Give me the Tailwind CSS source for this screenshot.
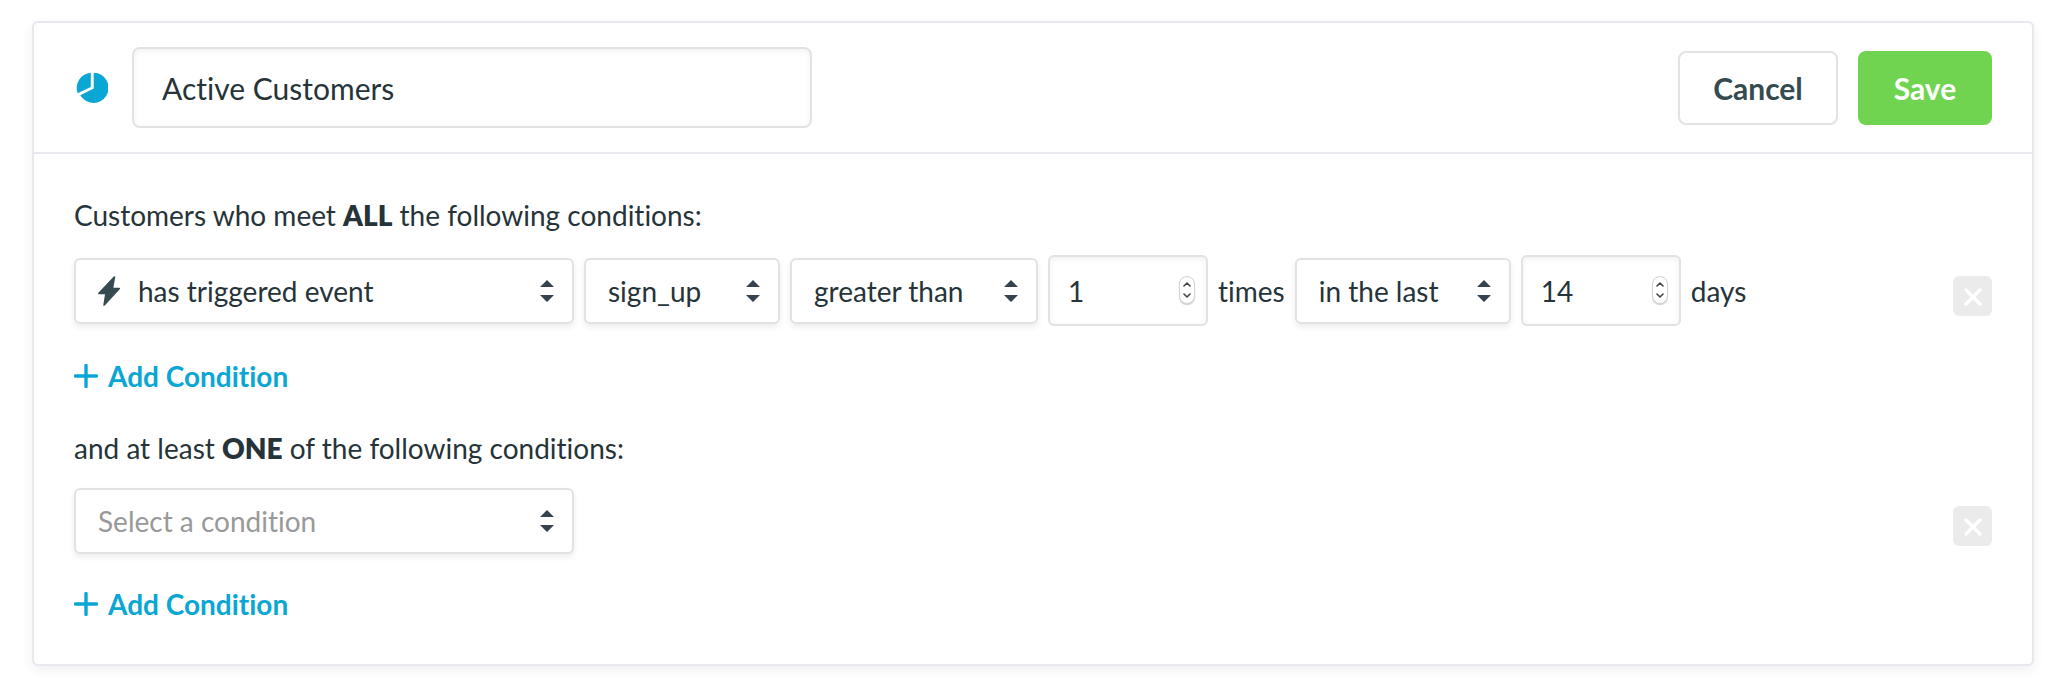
<!DOCTYPE html>
<html lang="en">
<head>
<meta charset="utf-8">
<meta name="viewport" content="width=device-width, initial-scale=1">
<title>Active Customers</title>
<script src="https://cdn.jsdelivr.net/npm/@tailwindcss/browser@4"></script>
</head>
<body class="bg-white pt-[21px] pr-[22px] pb-[23px] pl-8 font-['Lato','Open_Sans',sans-serif] text-[28px] leading-10 text-[#263439] [font-variant-ligatures:no-common-ligatures]">
<svg class="hidden" aria-hidden="true">
  <symbol id="sort" viewBox="0 0 14 22"><path d="M7 0l7 7H0zM7 22l7-7H0z" fill="#36434f"/></symbol>
  <symbol id="plus" viewBox="0 0 24 24"><path d="M12 1.5v21M1.5 12h21" stroke="currentColor" stroke-width="3.4" stroke-linecap="round" fill="none"/></symbol>
  <symbol id="cross" viewBox="0 0 18 18"><path d="M2 2l14 14M16 2L2 16" stroke="currentColor" stroke-width="3.2" stroke-linecap="round" fill="none"/></symbol>
  <symbol id="spin" viewBox="0 0 8 5"><path d="M1 4l3-3 3 3" stroke="#444" stroke-width="1.6" stroke-linecap="round" stroke-linejoin="round" fill="none"/></symbol>
</svg>
<form class="rounded-md border-2 border-[#e8e8ee] bg-white shadow-[0_4px_12px_rgba(40,40,90,0.07)]">
  <header class="flex items-center border-b-2 border-[#e8e8ee] py-6 pr-10 pl-[42px]">
    <svg class="mr-6 size-8 shrink-0" viewBox="0 0 32 32" fill="#0aa6d4" aria-hidden="true">
      <path d="M17.7 .7A15.1 15.1 0 1 1 4.3 23.2L17.7 16.6z"/>
      <path d="M14.8.7v14.4L1.7 21.200A15.200 15.200 0 0 1 14.800.7z"/>
    </svg>
    <input type="text" aria-label="Segment name" value="Active Customers" class="h-[81px] w-[680px] rounded-lg border-2 border-[#e2e2e2] bg-white px-7 text-[30px] shadow-[inset_0_2px_6px_rgba(0,0,0,0.06)] outline-none [font-variant-ligatures:no-common-ligatures]">
    <div class="ml-auto flex gap-5 text-[30px] font-bold">
      <button type="button" class="h-[74px] w-40 rounded-lg border-2 border-[#e2e2e2] bg-white text-[#364b50]">Cancel</button>
      <button type="submit" class="h-[74px] w-[134px] rounded-lg bg-[#70d450] text-white">Save</button>
    </div>
  </header>

  <main class="px-10 pt-[41px] pb-10">
    <section>
      <p>Customers who meet <b class="font-extrabold">ALL</b> the following conditions:</p>
      <div class="mt-5 flex items-center gap-[10px]">
        <div class="relative">
          <select aria-label="Condition" class="h-[66px] w-[500px] appearance-none rounded-md border-2 border-[#e2e2e2] bg-white pr-12 pl-[62px] shadow-[0_3px_6px_rgba(0,0,0,0.08)] outline-none"><option>has triggered event</option></select>
          <svg class="pointer-events-none absolute top-[18px] left-6 h-[30px] w-[22px]" viewBox="0 0 22 30" fill="#364b50" aria-hidden="true"><path d="M16 .3q1.300-.5 1.200.9L15.400 11.700h6q1.200.3.3 1.500L6.800 29.600q-1.600 1-1.500-.7L7 18.300H.8q-1.300-.4-.4-1.600z"/></svg>
          <svg class="pointer-events-none absolute top-[22px] right-5 h-[22px] w-[14px]" aria-hidden="true"><use href="#sort"/></svg>
        </div>
        <div class="relative">
          <select aria-label="Event" class="h-[66px] w-[196px] appearance-none rounded-md border-2 border-[#e2e2e2] bg-white pr-12 pl-[22px] shadow-[0_3px_6px_rgba(0,0,0,0.08)] outline-none"><option>sign_up</option></select>
          <svg class="pointer-events-none absolute top-[22px] right-5 h-[22px] w-[14px]" aria-hidden="true"><use href="#sort"/></svg>
        </div>
        <div class="relative">
          <select aria-label="Comparison" class="h-[66px] w-[248px] appearance-none rounded-md border-2 border-[#e2e2e2] bg-white pr-12 pl-[22px] shadow-[0_3px_6px_rgba(0,0,0,0.08)] outline-none"><option>greater than</option></select>
          <svg class="pointer-events-none absolute top-[22px] right-5 h-[22px] w-[14px]" aria-hidden="true"><use href="#sort"/></svg>
        </div>
        <div class="relative">
          <input id="times" type="number" value="1" class="h-[71px] w-40 appearance-none rounded-md border-2 border-[#e2e2e2] bg-white pr-9 pl-[18px] shadow-[inset_0_2px_6px_rgba(0,0,0,0.06)] outline-none [appearance:textfield] [&::-webkit-inner-spin-button]:appearance-none">
          <div class="absolute top-[21px] right-[13px] flex h-7 w-4 flex-col justify-between rounded-full border border-[#d4d4d4] bg-white py-[5px] shadow-[0_1px_1px_rgba(0,0,0,0.2)]">
            <button type="button" aria-label="Increase times" class="flex justify-center" onclick="times.stepUp()"><svg class="h-[5px] w-2"><use href="#spin"/></svg></button>
            <button type="button" aria-label="Decrease times" class="flex justify-center" onclick="times.stepDown()"><svg class="h-[5px] w-2 rotate-180"><use href="#spin"/></svg></button>
          </div>
        </div>
        <label for="times">times</label>
        <div class="relative">
          <select aria-label="Time range" class="h-[66px] w-[216px] appearance-none rounded-md border-2 border-[#e2e2e2] bg-white pr-12 pl-[22px] shadow-[0_3px_6px_rgba(0,0,0,0.08)] outline-none"><option>in the last</option></select>
          <svg class="pointer-events-none absolute top-[22px] right-5 h-[22px] w-[14px]" aria-hidden="true"><use href="#sort"/></svg>
        </div>
        <div class="relative">
          <input id="days" type="number" value="14" class="h-[71px] w-40 appearance-none rounded-md border-2 border-[#e2e2e2] bg-white pr-9 pl-[18px] shadow-[inset_0_2px_6px_rgba(0,0,0,0.06)] outline-none [appearance:textfield] [&::-webkit-inner-spin-button]:appearance-none">
          <div class="absolute top-[21px] right-[13px] flex h-7 w-4 flex-col justify-between rounded-full border border-[#d4d4d4] bg-white py-[5px] shadow-[0_1px_1px_rgba(0,0,0,0.2)]">
            <button type="button" aria-label="Increase days" class="flex justify-center" onclick="days.stepUp()"><svg class="h-[5px] w-2"><use href="#spin"/></svg></button>
            <button type="button" aria-label="Decrease days" class="flex justify-center" onclick="days.stepDown()"><svg class="h-[5px] w-2 rotate-180"><use href="#spin"/></svg></button>
          </div>
        </div>
        <label for="days">days</label>
        <button type="button" aria-label="Remove condition" class="mb-[10px] ml-auto flex h-10 w-[39px] items-center justify-center self-end rounded-md bg-[#ebebeb] text-white"><svg class="mt-[2px] size-[18px]"><use href="#cross"/></svg></button>
      </div>
      <button type="button" class="mt-[30px] flex items-center gap-[10px] font-bold text-[#0aa6d4]"><svg class="size-6"><use href="#plus"/></svg>Add Condition</button>
    </section>

    <section class="mt-8">
      <p>and at least <b class="font-extrabold">ONE</b> of the following conditions:</p>
      <div class="mt-5 flex items-center">
        <div class="relative">
          <select aria-label="Condition" class="h-[66px] w-[500px] appearance-none rounded-md border-2 border-[#e2e2e2] bg-white pr-12 pl-[22px] text-[#999] shadow-[0_3px_6px_rgba(0,0,0,0.08)] outline-none [font-variant-ligatures:no-common-ligatures]"><option>Select a condition</option></select>
          <svg class="pointer-events-none absolute top-[22px] right-5 h-[22px] w-[14px]" aria-hidden="true"><use href="#sort"/></svg>
        </div>
        <button type="button" aria-label="Remove condition" class="mb-2 ml-auto flex h-10 w-[39px] items-center justify-center self-end rounded-md bg-[#ebebeb] text-white"><svg class="mt-[2px] size-[18px]"><use href="#cross"/></svg></button>
      </div>
      <button type="button" class="mt-[30px] flex items-center gap-[10px] font-bold text-[#0aa6d4] [font-variant-ligatures:no-common-ligatures]"><svg class="size-6"><use href="#plus"/></svg>Add Condition</button>
    </section>
  </main>
</form>
</body>
</html>
